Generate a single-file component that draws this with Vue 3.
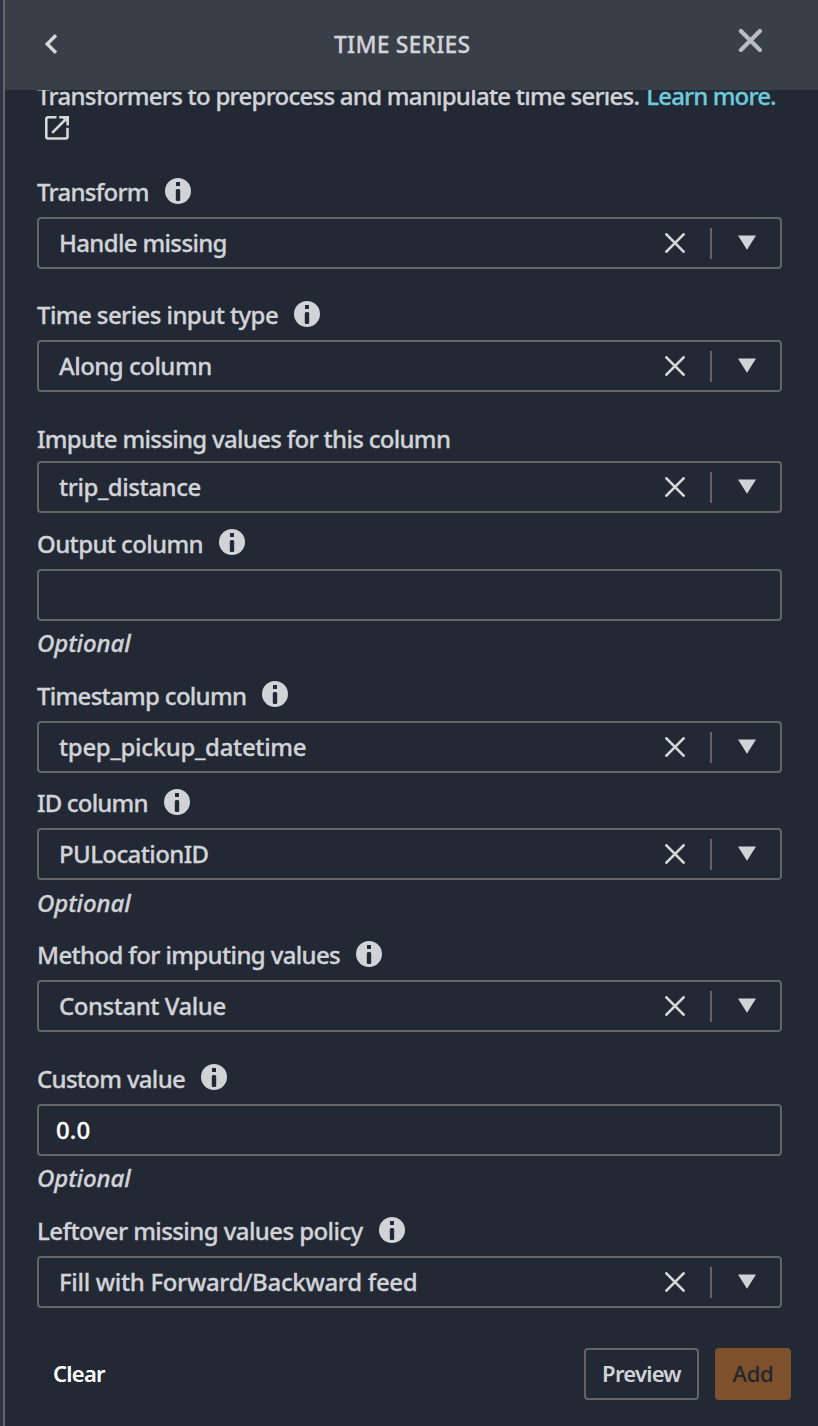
<script setup>
// track / valueTrack: letter-spacing in px for the label and the value
const fields = [
  { label: 'Transform', track: -0.74, info: true, kind: 'select', value: 'Handle missing', valueTrack: -0.66, gap: 31 },
  { label: 'Time series input type', track: -0.58, info: true, kind: 'select', value: 'Along column', valueTrack: -0.51, gap: 32 },
  { label: 'Impute missing values for this column', track: -0.7, kind: 'select', value: 'trip_distance', valueTrack: -0.45, gap: 16 },
  { label: 'Output column', track: -0.63, info: true, raised: true, kind: 'input', value: '', valueTrack: 0, optional: true, gap: 60 },
  { label: 'Timestamp column', track: -0.71, info: true, raised: true, kind: 'select', value: 'tpep_pickup_datetime', valueTrack: -0.33, gap: 15 },
  { label: 'ID column', track: -0.82, info: true, kind: 'select', value: 'PULocationID', valueTrack: -0.6, optional: true, low: true, gap: 60 },
  { label: 'Method for imputing values', track: -0.64, info: true, kind: 'select', value: 'Constant Value', valueTrack: -0.47, gap: 32 },
  { label: 'Custom value', track: -0.7, info: true, raised: true, kind: 'input', value: '0.0', valueTrack: 0.1, optional: true, gap: 60 },
  { label: 'Leftover missing values policy', track: -0.58, info: true, kind: 'select', value: 'Fill with Forward/Backward feed', valueTrack: -0.33, gap: 40 },
]
</script>

<template>
  <div class="panel">
    <header class="header">
      <svg class="back" width="14" height="22" viewBox="0 0 14 22"><path d="M12 2.2 3.2 11l8.8 8.8" fill="none" stroke="#d5d7da" stroke-width="3.4" /></svg>
      <h1 class="title">TIME SERIES</h1>
      <svg class="close" width="24" height="24" viewBox="0 0 24 24"><path d="M2.9 3.1l19 19M21.9 3.1l-19 19" fill="none" stroke="#b9bcc0" stroke-width="4.2" stroke-linecap="round" /></svg>
    </header>
    <main class="body">
      <div class="intro">
        <p class="desc"><span>Transformers to preprocess and manipulate time series.</span><a class="link">Learn more.</a></p>
        <svg class="external" width="26" height="26" viewBox="0 0 26 26">
          <path d="M12.5 2.3H4Q2.3 2.3 2.3 4v17.8q0 1.7 1.7 1.7h17.8q1.7 0 1.7-1.7V12.8M8.2 17.8 22.5 3.5" fill="none" stroke="#d5d7da" stroke-width="2.6" />
          <path d="M15.2 1H25v9.6h-2.6V6.8L18.6 3.6h-3.4z" fill="#d5d7da" />
        </svg>
      </div>
      <section v-for="f in fields" :key="f.label" class="field" :style="{ marginBottom: f.gap + 'px' }">
        <div class="label-row" :class="{ short: !f.info }">
          <label class="label" :style="{ letterSpacing: f.track + 'px' }">{{ f.label }}</label>
          <svg v-if="f.info" class="info" :class="{ raised: f.raised }" width="26" height="26" viewBox="0 0 26 26">
            <circle cx="13" cy="13" r="13" fill="#d2d3d7" />
            <rect x="11" y="4" width="4" height="4" fill="#222834" />
            <rect x="10.8" y="11" width="4.4" height="12" rx="1.6" fill="#222834" />
          </svg>
        </div>
        <div class="box" :class="f.kind">
          <span class="value" :style="{ letterSpacing: f.valueTrack + 'px' }">{{ f.value }}</span>
          <template v-if="f.kind === 'select'">
            <svg width="20" height="20" viewBox="0 0 20 20"><path d="M1.4 1.4l17.2 17.2M18.6 1.4 1.4 18.6" fill="none" stroke="#d5d7da" stroke-width="2.7" stroke-linecap="round" /></svg>
            <span class="divider"></span>
            <svg class="arrow" width="18" height="15" viewBox="0 0 18 15"><path d="M0 .4h18L9 14.7z" fill="#d2d3d7" /></svg>
          </template>
        </div>
        <em v-if="f.optional" class="optional" :class="{ low: f.low }">Optional</em>
      </section>
      <footer class="footer">
        <button class="clear">Clear</button>
        <button class="preview">Preview</button>
        <button class="add">Add</button>
      </footer>
    </main>
  </div>
</template>

<style>
body { background: #2c3545; overflow: hidden; }
</style>

<style scoped>
.panel {
  box-sizing: border-box;
  width: 815px;
  height: 1426px;
  margin-left: 3px;
  overflow: hidden;
  border-left: 2px solid #656565;
  background: #222834;
  color: #d2d3d7;
  font-family: "Noto Sans", "Open Sans", sans-serif;
  font-size: 24px;
  font-weight: 500;
  line-height: 32px;
  -webkit-text-stroke: 0.3px currentColor;
}
.header { display: flex; height: 90px; background: #393f48; position: relative; z-index: 1; }
.back { margin: 33px 0 0 39px; }
.title { flex: none; width: 136px; margin: 28px 0 0 276px; font-size: 23px; font-weight: 500; line-height: 32px; letter-spacing: 0.16px; white-space: nowrap; }
.close { margin: 28px 0 0 268px; }
.body { display: flex; flex-direction: column; padding-left: 32px; }
.intro { height: 87px; }
.desc { display: flex; gap: 7px; margin: -10px 0 0; letter-spacing: -0.75px; white-space: nowrap; }
.link { color: #6dcbdc; letter-spacing: -0.88px; }
.external { display: block; margin: 3px 0 0 7px; }
.field { display: flex; flex-direction: column; width: 745px; }
.label-row { display: flex; height: 40px; gap: 16px; white-space: nowrap; }
.label-row.short { height: 37px; }
.label { display: block; height: 32px; margin-top: -1px; }
.info { margin-top: 1px; }
.info.raised { margin-top: 0; }
.box { box-sizing: border-box; display: flex; align-items: center; height: 52px; border: 2px solid #656565; border-radius: 4px; }
.value { flex: 1; padding-left: 20px; white-space: nowrap; }
.input .value { padding-left: 17px; color: #fff; }
.divider { width: 2px; height: 31px; margin: 0 26px 0 25px; background: #656565; }
.arrow { margin: 0 24px 1px 0; }
.optional { height: 32px; margin: 6px 0 -38px; letter-spacing: -0.1px; }
.optional.low { margin: 7px 0 -39px; }
.footer { display: flex; align-items: center; height: 52px; }
button { box-sizing: border-box; height: 52px; padding: 0 0 2px; border: 0; border-radius: 4px; background: none; color: #fff; font: 600 22px/32px "Noto Sans", "Open Sans", sans-serif; letter-spacing: -0.75px; -webkit-text-stroke: 0; }
.clear { margin: 0 auto 0 16px; }
.preview { width: 115px; margin-right: 16px; border: 2px solid #656565; color: #d2d3d7; }
.add { width: 76px; margin-right: 27px; background: #7e502c; color: #22262c; font-weight: 500; letter-spacing: -0.2px; }
</style>
